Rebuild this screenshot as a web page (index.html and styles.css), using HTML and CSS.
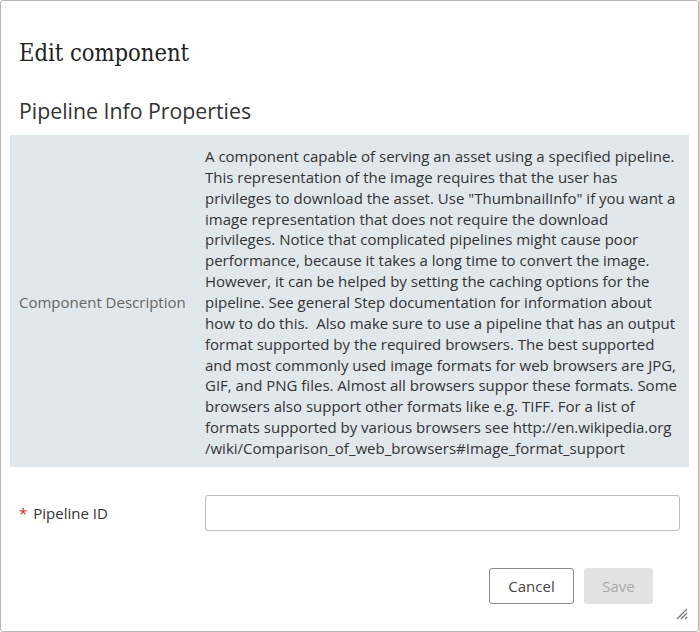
FILE: index.html
```html
<!DOCTYPE html>
<html>
<head>
<meta charset="utf-8">
<link rel="stylesheet" href="styles.css">
</head>
<body>
<div class="dialog">
  <h1 class="title">Edit component</h1>
  <h2 class="section">Pipeline Info Properties</h2>
  <div class="desc-box">
    <div class="desc-label">Component Description</div>
    <div class="desc-text">
      <span class="ln">A component capable of serving an asset using a specified pipeline.</span>
      <span class="ln">This representation of the image requires that the user has</span>
      <span class="ln">privileges to download the asset. Use "ThumbnailInfo" if you want a</span>
      <span class="ln">image representation that does not require the download</span>
      <span class="ln">privileges. Notice that complicated pipelines might cause poor</span>
      <span class="ln">performance, because it takes a long time to convert the image.</span>
      <span class="ln">However, it can be helped by setting the caching options for the</span>
      <span class="ln">pipeline. See general Step documentation for information about</span>
      <span class="ln">how to do this.&nbsp; Also make sure to use a pipeline that has an output</span>
      <span class="ln">format supported by the required browsers. The best supported</span>
      <span class="ln">and most commonly used image formats for web browsers are JPG,</span>
      <span class="ln">GIF, and PNG files. Almost all browsers suppor these formats. Some</span>
      <span class="ln">browsers also support other formats like e.g. TIFF. For a list of</span>
      <span class="ln">formats supported by various browsers see http://en.wikipedia.org</span>
      <span class="ln">/wiki/Comparison_of_web_browsers#Image_format_support</span>
    </div>
  </div>
  <div class="field-row">
    <label class="field-label"><span class="req">*</span>Pipeline ID</label>
    <input class="field-input" type="text">
  </div>
  <div class="actions">
    <button class="btn btn-cancel">Cancel</button>
    <button class="btn btn-save" disabled>Save</button>
  </div>
  <svg class="grip" width="12" height="12" viewBox="0 0 12 12">
    <path d="M11 1 L1 11 M11 5 L5 11 M11 9 L9 11" stroke="#777" stroke-width="1.2" fill="none"/>
  </svg>
</div>
</body>
</html>
```
FILE: styles.css
```css
html, body {
  margin: 0;
  padding: 0;
  background: #fff;
}
.dialog {
  position: relative;
  box-sizing: border-box;
  width: 699px;
  height: 632px;
  border: 1px solid #b5b5b5;
  border-radius: 3px;
  background: #fff;
  padding: 0 9px 0 9px;
  font-family: "Open Sans", "Noto Sans", sans-serif;
  color: #333;
}
.title {
  margin: 0;
  padding: 37px 0 0 9px;
  font-family: "DejaVu Serif", serif;
  font-stretch: condensed;
  font-weight: normal;
  font-size: 23.5px;
  line-height: 30px;
  color: #222;
}
.section {
  margin: 0;
  padding: 28px 0 0 9px;
  font-weight: normal;
  font-size: 21.3px;
  line-height: 30px;
  color: #333;
}
.desc-box {
  margin-top: 9px;
  background: #e1e8eb;
  display: flex;
  align-items: center;
  width: 679px;
  box-sizing: border-box;
  padding: 11px 0 8px 0;
}
.desc-label {
  width: 195px;
  flex: none;
  box-sizing: border-box;
  padding-left: 9px;
  font-size: 15px;
  color: #666;
}
.desc-text {
  font-size: 15px;
  line-height: 20.86px;
  color: #333;
}
.ln {
  display: block;
  white-space: nowrap;
}
.field-row {
  display: flex;
  align-items: center;
  margin-top: 28px;
}
.field-label {
  width: 195px;
  flex: none;
  box-sizing: border-box;
  padding-left: 9px;
  font-size: 15px;
  color: #333;
}
.req {
  color: #d9232d;
  margin-right: 6px;
}
.field-input {
  width: 475px;
  height: 36px;
  box-sizing: border-box;
  border: 1px solid #bdbdbd;
  border-radius: 3px;
  margin: 0;
}
.actions {
  display: flex;
  justify-content: flex-end;
  gap: 10px;
  margin-top: 37px;
  padding-right: 36px;
}
.btn {
  height: 36px;
  box-sizing: border-box;
  border-radius: 3px;
  font-family: "Open Sans", "Noto Sans", sans-serif;
  font-size: 15px;
}
.btn-cancel {
  width: 85px;
  background: #fff;
  border: 1px solid #8a8a8a;
  color: #444;
}
.btn-save {
  width: 69px;
  background: #e2e2e2;
  border: none;
  color: #a8a8a8;
}
.grip {
  position: absolute;
  right: 10px;
  bottom: 11px;
}
```
